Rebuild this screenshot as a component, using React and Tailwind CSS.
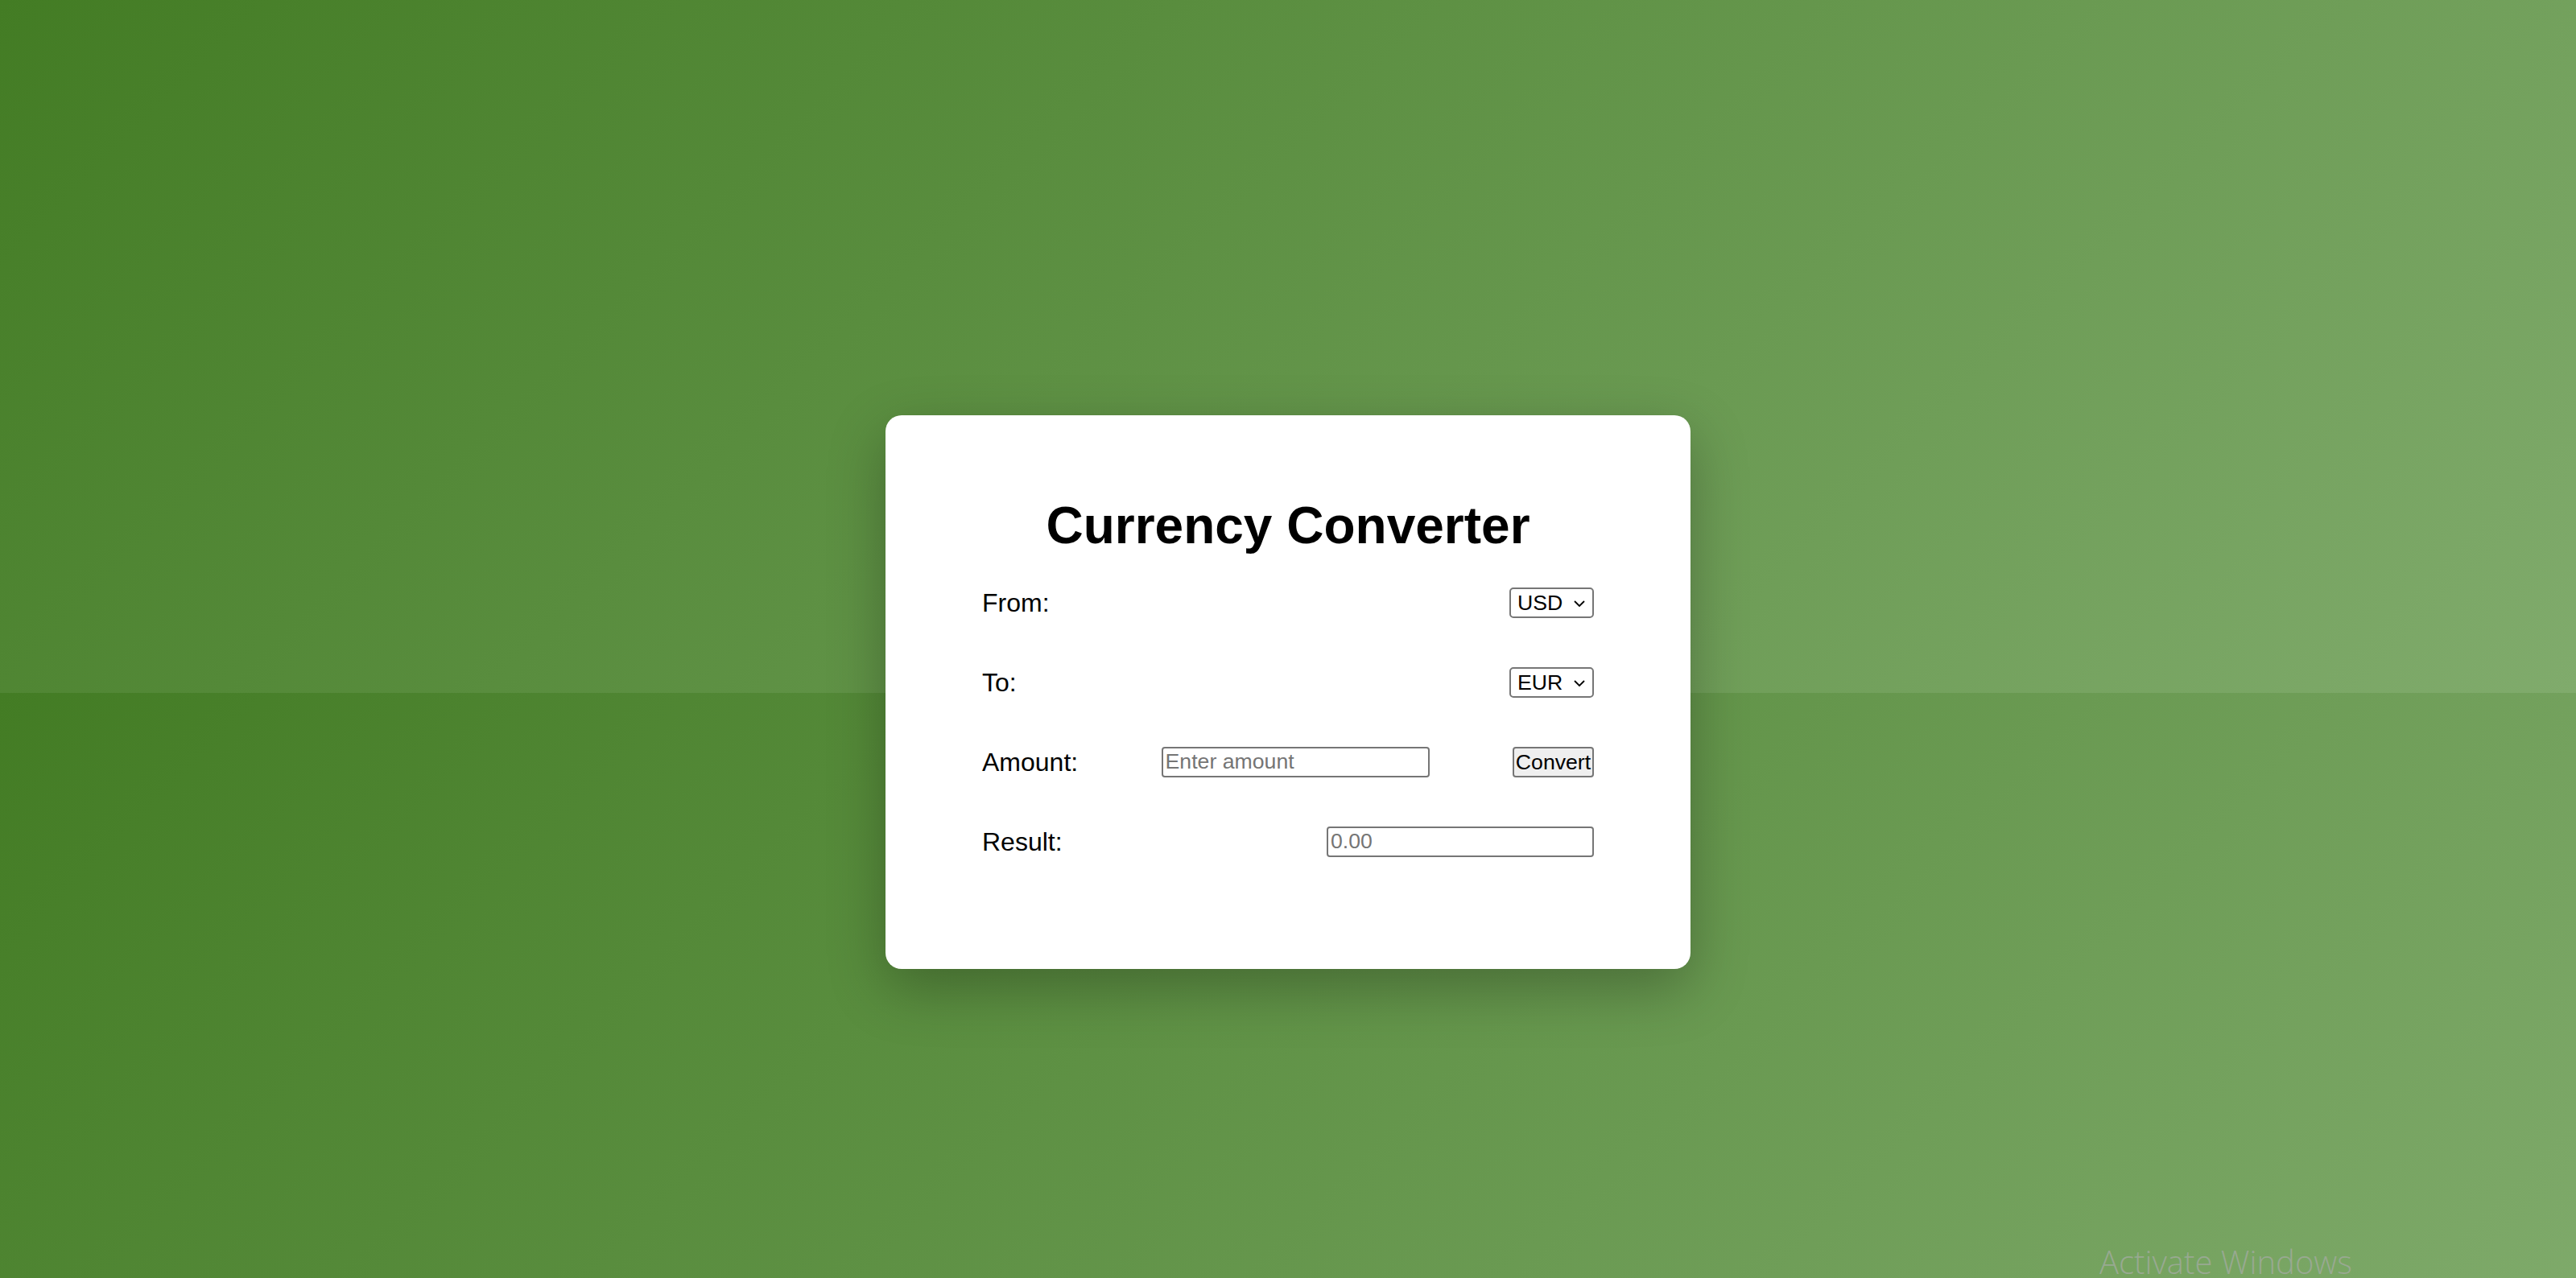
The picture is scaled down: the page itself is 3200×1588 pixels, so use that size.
import React from 'react';

const Chevron = () => (
  <svg width="16" height="10" viewBox="0 0 16 10" className="pointer-events-none absolute right-[10px] top-[15px]">
    <path d="M2 2 L8 8 L14 2" fill="none" stroke="#000" strokeWidth="1.8" />
  </svg>
);

const Select = ({ value }) => (
  <div className="relative h-[38px] w-[105px]">
    <select
      defaultValue={value}
      className="h-full w-full appearance-none rounded-[5px] border-2 border-[#767676] bg-white pl-[8px] text-[26.67px] leading-none text-black outline-none"
    >
      <option>USD</option>
      <option>EUR</option>
    </select>
    <Chevron />
  </div>
);

export default function App() {
  return (
    <div className="relative min-h-screen w-full overflow-hidden bg-[linear-gradient(135deg,#437c24,#80ab6c)] bg-[length:100%_861px] bg-repeat pt-[516px] font-['Liberation_Sans',Arial,sans-serif]">
      <div className="mx-auto h-[688px] w-[1000px] rounded-[20px] bg-white px-[120px] pt-[100px] shadow-[0_24px_70px_rgba(0,0,0,0.27)]">
        <h1 className="text-center text-[64px] font-bold leading-[74px] text-black">Currency Converter</h1>

        <div className="mt-[40px] flex flex-col gap-[61px]">
          <div className="flex h-[38px] items-center justify-between">
            <label className="text-[32px] leading-[37px] text-black">From:</label>
            <Select value="USD" />
          </div>

          <div className="flex h-[38px] items-center justify-between">
            <label className="text-[32px] leading-[37px] text-black">To:</label>
            <Select value="EUR" />
          </div>

          <div className="flex h-[38px] items-center justify-between">
            <label className="text-[32px] leading-[37px] text-black">Amount:</label>
            <input
              placeholder="Enter amount"
              className="h-[38px] w-[333px] rounded-[4px] border-2 border-[#767676] px-[3px] text-[26.67px] text-black outline-none placeholder:text-[#757575]"
            />
            <button className="h-[38px] w-[101px] rounded-[4px] border-2 border-[#767676] bg-[#efefef] text-[26.67px] leading-none text-black">
              Convert
            </button>
          </div>

          <div className="flex h-[38px] items-center justify-between">
            <label className="text-[32px] leading-[37px] text-black">Result:</label>
            <input
              readOnly
              placeholder="0.00"
              className="h-[38px] w-[332px] rounded-[4px] border-2 border-[#767676] px-[3px] text-[26.67px] text-black outline-none placeholder:text-[#757575]"
            />
          </div>
        </div>
      </div>

      <div className="absolute left-[2608px] top-[1548px] font-['Open_Sans',sans-serif] text-[40px] font-light leading-none text-[#98a991]">
        Activate Windows
      </div>
    </div>
  );
}
